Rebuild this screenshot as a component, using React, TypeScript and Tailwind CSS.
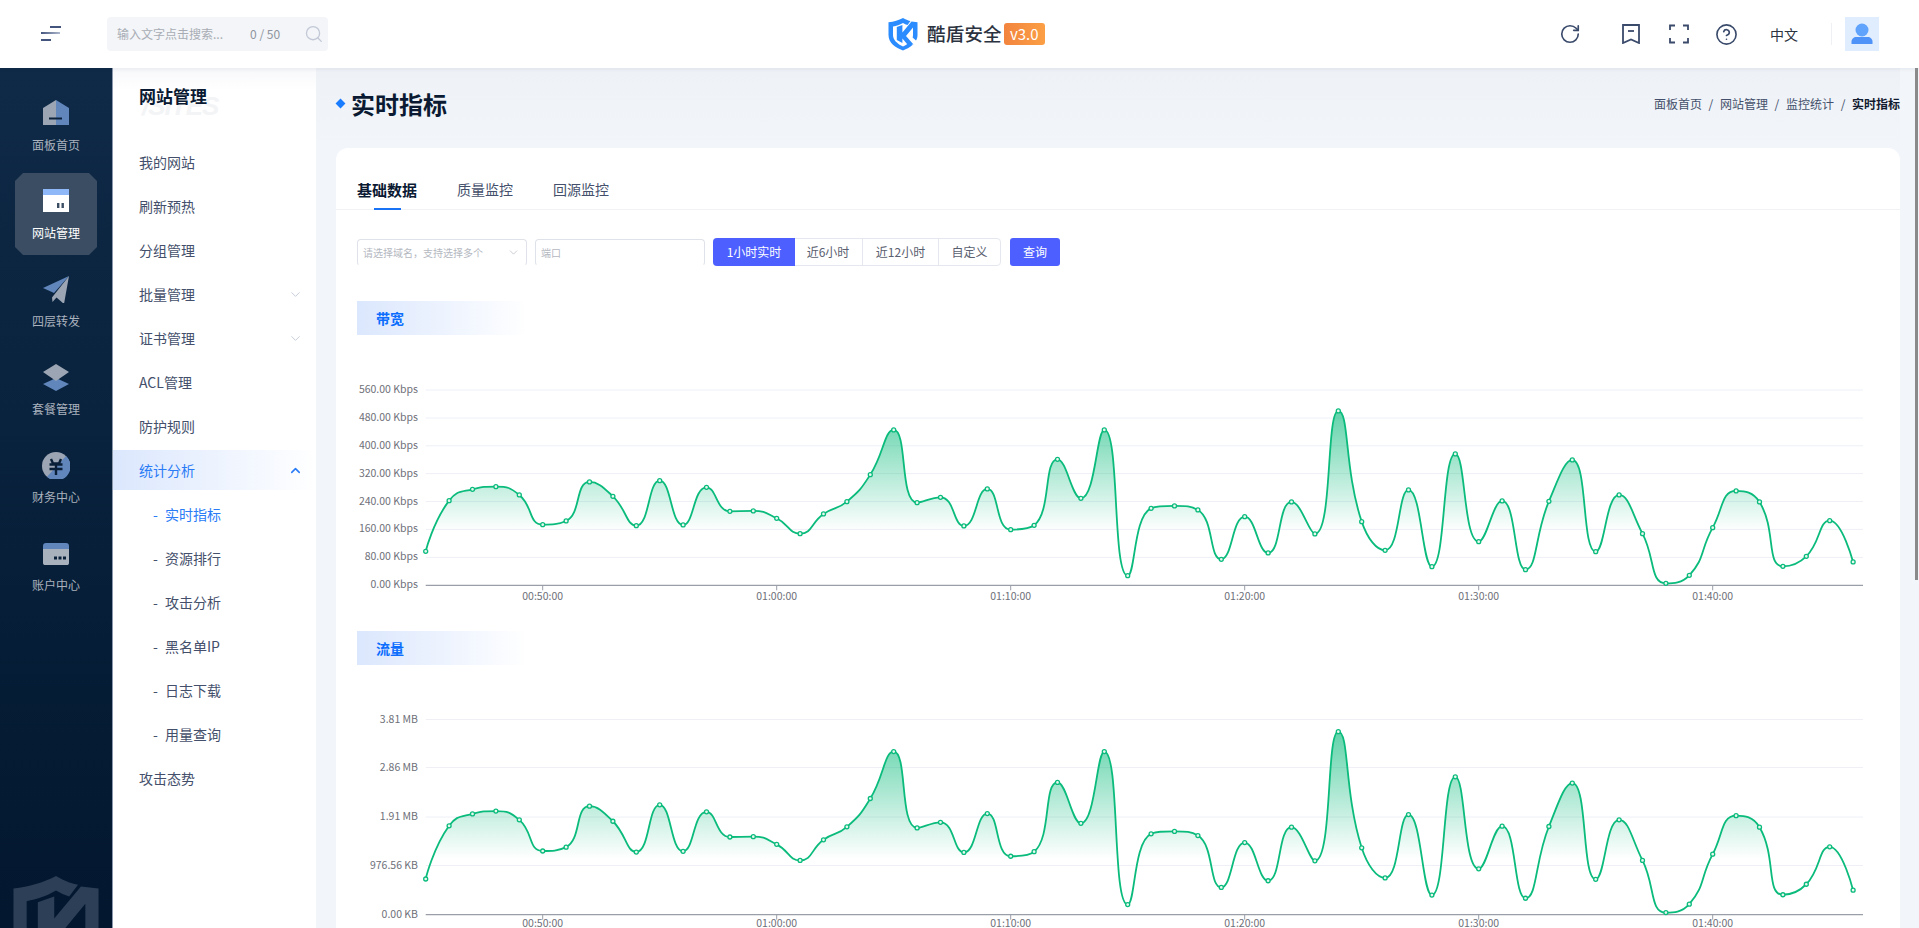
import { ChevronDown, ChevronUp, CircleHelp, RotateCw, Search } from 'lucide-react';

// y position of every sample, read from the bandwidth chart (px above baseline / 3 scale)
const samples = [
	544, 392, 358, 350, 375, 464, 453, 336, 379, 467, 332, 465, 352, 424, 423, 445, 491, 432, 395, 314, 180,
	398, 382, 468, 357, 479, 466, 268, 385, 180, 617, 415, 408, 420, 568, 440, 549, 396, 492, 123, 455, 541,
	360, 590, 252, 515, 393, 599, 394, 270, 545, 375, 491, 640, 616, 473, 363, 396, 589, 559, 452, 576,
];
const heights = samples.map((s) => (646 - s) / 3);

const X0 = 425.7;
const XN = 1863;
const STEP = 23.4;
const ticks = ['00:50:00', '01:00:00', '01:10:00', '01:20:00', '01:30:00', '01:40:00'];

const clamp = (v: number, a: number, b: number) => Math.max(Math.min(a, b), Math.min(v, Math.max(a, b)));

// same control point rule as a smoothed echarts line: no overshoot past neighbouring points
function smoothPath(pts: [number, number][]) {
	const smooth = 0.5;
	const n = pts.length;
	let d = `M${pts[0][0]} ${pts[0][1]}`;
	let cp0 = pts[0];
	for (let i = 1; i < n; i++) {
		const [x, y] = pts[i];
		const [px, py] = pts[i - 1];
		if (i === n - 1) {
			d += `C${cp0[0].toFixed(2)} ${cp0[1].toFixed(2)} ${x.toFixed(2)} ${y.toFixed(2)} ${x.toFixed(2)} ${y.toFixed(2)}`;
			break;
		}
		const [nx, ny] = pts[i + 1];
		const lenPrev = Math.hypot(x - px, y - py);
		const lenNext = Math.hypot(nx - x, ny - y);
		const ratio = lenNext / (lenNext + lenPrev);
		let ncx = clamp(x + (nx - px) * smooth * ratio, x, nx);
		let ncy = clamp(y + (ny - py) * smooth * ratio, y, ny);
		const c1x = clamp(x - ((ncx - x) * lenPrev) / lenNext, px, x);
		const c1y = clamp(y - ((ncy - y) * lenPrev) / lenNext, py, y);
		ncx = x + ((x - c1x) * lenNext) / lenPrev;
		ncy = y + ((y - c1y) * lenNext) / lenPrev;
		d += `C${cp0[0].toFixed(2)} ${cp0[1].toFixed(2)} ${c1x.toFixed(2)} ${c1y.toFixed(2)} ${x.toFixed(2)} ${y.toFixed(2)}`;
		cp0 = [ncx, ncy];
	}
	return d;
}

interface ChartProps {
	id: string;
	top: number;
	height: number;
	baseline: number;
	scale: number;
	fadeEnd: number;
	grid: { y: number; label: string }[];
	labelY: number;
}

function Chart({ id, top, height, baseline, scale, fadeEnd, grid, labelY }: ChartProps) {
	const pts = heights.map((h, i): [number, number] => [X0 + i * STEP, baseline - h * scale]);
	const line = smoothPath(pts);
	const topY = Math.min(...pts.map((p) => p[1]));
	const lastX = pts[pts.length - 1][0];
	return (
		<svg
			className="block"
			width={1522}
			height={height}
			viewBox={`357 ${top} 1522 ${height}`}
			fontFamily="'Noto Sans CJK SC', sans-serif"
		>
			<defs>
				<linearGradient id={id} gradientUnits="userSpaceOnUse" x1="0" x2="0" y1={topY} y2={fadeEnd}>
					<stop offset="0" stopColor="#00b877" stopOpacity="0.62" />
					<stop offset="1" stopColor="#00b877" stopOpacity="0" />
				</linearGradient>
			</defs>
			{grid.map((g, i) => (
				<g key={g.label}>
					<line
						x1={X0}
						x2={XN}
						y1={g.y}
						y2={g.y}
						stroke={i === grid.length - 1 ? '#9a9ea8' : '#eef0f6'}
						strokeWidth={i === grid.length - 1 ? 1.3 : 1}
					/>
					<text x={418} y={g.y + 3} textAnchor="end" fontSize="10.5" fill="#6e7079">
						{g.label}
					</text>
				</g>
			))}
			{ticks.map((t, i) => {
				const x = X0 + (5 + i * 10) * STEP;
				return (
					<g key={t}>
						<line x1={x} x2={x} y1={baseline} y2={baseline + 5} stroke="#9a9ea8" />
						<text x={x} y={labelY} textAnchor="middle" fontSize="10.5" fill="#6e7079">
							{t}
						</text>
					</g>
				);
			})}
			<path d={`${line}L${lastX} ${baseline}L${X0} ${baseline}Z`} fill={`url(#${id})`} />
			<path d={line} fill="none" stroke="#0abb7c" strokeWidth="1.8" />
			{pts.map(([x, y]) => (
				<circle key={x} cx={x} cy={y} r="2" fill="#e9f9f2" stroke="#0abb7c" strokeWidth="1.3" />
			))}
		</svg>
	);
}

function Shield({ className, color }: { className: string; color: string }) {
	return (
		<svg className={className} viewBox="0 0 30 34" fill="none">
			<path
				d="M15 1C18.5 3 20.5 3.6 22.5 4L19.5 8C18 7.6 16.5 6.9 15 6C11.5 8 8.5 9 5 9.6V18C5 23 9.5 26.5 13 28.5L15 29.5C17 28.6 19.5 27 21.5 25L24.5 28C21.5 30.6 18.5 32 15 33.5C7.5 30.5 0.5 26 0.5 18V5.3C6 4.6 10.5 3.3 15 1Z"
				fill={color}
			/>
			<path d="M8.8 10L14.4 8V15.5L23.5 4.6L29.5 5.3V18C29.5 20 29 22 28 23.5L24.6 20.5C24.9 19.5 25 18.8 25 18V10.5L18 19L25.5 27.5H19.5L14.4 21.5V26L8.8 23Z" fill={color} />
		</svg>
	);
}

const HomeIcon = (
	<svg width="28" height="28" viewBox="0 0 28 28">
		<path d="M14 1L1 9V26H14Z" fill="#9ba5b3" />
		<path d="M14 1L27 9V26H14Z" fill="#6086bc" />
		<rect x="7" y="18.5" width="13" height="2" fill="#0c223c" />
	</svg>
);
const SiteIcon = (
	<svg width="28" height="28" viewBox="0 0 28 28">
		<rect x="1" y="2" width="26" height="23" fill="#ffffff" />
		<rect x="1" y="2" width="26" height="6" fill="#8fb8f8" />
		<rect x="15" y="16" width="2.4" height="5" fill="#3a4d63" />
		<rect x="19.5" y="16" width="2.4" height="5" fill="#3a4d63" />
	</svg>
);
const PlaneIcon = (
	<svg width="28" height="28" viewBox="0 0 28 28">
		<path d="M27 1L1 13L12 18Z" fill="#6086bc" />
		<path d="M27 1L10 22.5L10.5 27L14.5 22.5L22 29Z" fill="#9ba5b3" />
	</svg>
);
const LayersIcon = (
	<svg width="28" height="28" viewBox="0 0 28 28">
		<path d="M14 15L1 21L14 28L27 21Z" fill="#6086bc" />
		<path d="M14 1L1 9L14 18L27 9Z" fill="#9ba5b3" />
	</svg>
);
const FinanceIcon = (
	<svg width="28" height="28" viewBox="0 0 28 28">
		<circle cx="14" cy="15" r="14" fill="#9ba5b3" />
		<path d="M24 5A14 14 0 0 1 5 25.8Z" fill="#6086bc" />
		<path d="M9 8L11 12.5H17L19 8M7.5 13.5H20.5M7.5 18H20.5M14 13V24" fill="none" stroke="#0a2038" strokeWidth="2.4" />
	</svg>
);
const AccountIcon = (
	<svg width="28" height="28" viewBox="0 0 28 28">
		<path d="M1 10V7C1 5 2 4 4 4H24C26 4 27 5 27 7V10Z" fill="#6086bc" />
		<path d="M1 10H27V24C27 25.5 26 26 25 26H3C2 26 1 25.5 1 24Z" fill="#a9b1bd" />
		<rect x="12" y="17.5" width="3" height="3" fill="#0a2038" />
		<rect x="16.5" y="17.5" width="3" height="3" fill="#0a2038" />
		<rect x="21" y="17.5" width="3" height="3" fill="#0a2038" />
	</svg>
);

const railItems = [
	{ label: '面板首页', icon: HomeIcon },
	{ label: '网站管理', icon: SiteIcon, active: true },
	{ label: '四层转发', icon: PlaneIcon },
	{ label: '套餐管理', icon: LayersIcon },
	{ label: '财务中心', icon: FinanceIcon },
	{ label: '账户中心', icon: AccountIcon },
];

const menuItems = [
	{ label: '我的网站' },
	{ label: '刷新预热' },
	{ label: '分组管理' },
	{ label: '批量管理', arrow: true },
	{ label: '证书管理', arrow: true },
	{ label: 'ACL管理' },
	{ label: '防护规则' },
	{ label: '统计分析', open: true },
	{ label: '实时指标', sub: true, current: true },
	{ label: '资源排行', sub: true },
	{ label: '攻击分析', sub: true },
	{ label: '黑名单IP', sub: true },
	{ label: '日志下载', sub: true },
	{ label: '用量查询', sub: true },
	{ label: '攻击态势' },
];

function Rail() {
	return (
		<aside className="relative h-full w-[113px] shrink-0 overflow-hidden border-r border-[#8b97ab] bg-linear-to-b from-[#0f2a47] to-[#03172f] pt-[17px]">
			<div className="flex flex-col items-center gap-[6px]">
				{railItems.map((item) => (
					<div
						key={item.label}
						className={`flex h-[82px] w-[82px] flex-col items-center pt-[14px] ${
							item.active ? 'bg-[#3a4d63] [clip-path:polygon(8px_0,74px_0,82px_8px,82px_74px,74px_82px,8px_82px,0_74px,0_8px)]' : ''
						}`}
					>
						{item.icon}
						<span className={`mt-[9px] text-[12px] leading-[18px] ${item.active ? 'text-white' : 'text-[#aab2bd]'}`}>
							{item.label}
						</span>
					</div>
				))}
			</div>
			<Shield className="absolute left-[12px] top-[805px] w-[88px]" color="#2c3f56" />
		</aside>
	);
}

function Menu() {
	return (
		<nav className="h-full w-[203px] shrink-0 bg-white">
			<div className="relative h-[74px] bg-linear-to-b from-[#f7f8fa] to-white to-30%">
				<span className="absolute left-[29px] top-[22px] font-['Liberation_Sans',sans-serif] text-[26px] font-bold italic leading-[32px] tracking-[-1px] text-[#f3f4f6]">/SITES</span>
				<span className="absolute left-[26px] top-[16px] text-[17px] font-bold leading-[24px] text-[#0b1a33]">网站管理</span>
			</div>
			<div className="flex flex-col gap-[4px]">
				{menuItems.map((item) => (
					<div
						key={item.label}
						className={`flex h-[40px] items-center pr-[13px] text-[14px] ${item.sub ? 'pl-[40px]' : 'pl-[26px]'} ${
							item.open ? 'bg-linear-to-r from-[#dbe7fd] to-white' : ''
						} ${item.open || item.current ? 'text-[#2a7bf6]' : 'text-[#44506b]'}`}
					>
						{item.sub && <span className="w-[12px]">-</span>}
						<span className="flex-1">{item.label}</span>
						{item.arrow && <ChevronDown size={15} strokeWidth={1.5} className="text-[#c3cad8]" />}
						{item.open && <ChevronUp size={15} strokeWidth={2.5} className="text-[#2a7bf6]" />}
					</div>
				))}
			</div>
		</nav>
	);
}

function Header() {
	return (
		<header className="relative z-10 flex h-[68px] shrink-0 items-center bg-white shadow-[0_1px_4px_rgba(30,50,90,0.08)]">
			<svg className="ml-[41px]" width="20" height="16" viewBox="0 0 20 16">
				<defs>
					<linearGradient id="burger" x1="0" x2="1" y1="0" y2="0">
						<stop offset="0" stopColor="#44557d" />
						<stop offset="1" stopColor="#aeb8cc" />
					</linearGradient>
				</defs>
				<rect x="9" y="0" width="11" height="2" fill="#44557d" />
				<rect x="0" y="6" width="19" height="2" fill="url(#burger)" />
				<rect x="0" y="13" width="10" height="2" fill="#44557d" />
			</svg>
			<div className="ml-[46px] flex h-[34px] w-[221px] items-center rounded-[4px] bg-[#f3f5f8] pl-[10px] pr-[4px] text-[12px]">
				<span className="w-[135px] text-[#a8adb5]">输入文字点击搜索...</span>
				<span className="w-[55px] text-[#8e949e]">0 / 50</span>
				<Search size={20} strokeWidth={1.6} className="text-[#c2c8d6]" />
			</div>
			<div className="ml-[560px] flex items-center">
				<Shield className="h-[34px] w-[30px]" color="#2b8cff" />
				<span className="ml-[9px] text-[18.5px] font-medium tracking-[0.2px] text-[#2b3240]">酷盾安全</span>
				<span className="ml-[2px] flex h-[22px] w-[41px] items-center justify-center rounded-[3px] bg-linear-to-r from-[#f2843e] to-[#fb9f45] text-[15px] text-white">
					v3.0
				</span>
			</div>
			<div className="ml-auto flex items-center pr-[40px] text-[#3a4a6b]">
				<RotateCw size={22} strokeWidth={1.8} />
				<svg className="ml-[40px]" width="20" height="20" viewBox="0 0 20 20" fill="none" stroke="currentColor" strokeWidth="1.8">
					<path d="M2 1H18V19L10 15.5L2 19Z" />
					<path d="M7 7H13" />
				</svg>
				<svg className="ml-[28px]" width="20" height="20" viewBox="0 0 20 20" fill="none" stroke="currentColor" strokeWidth="1.8">
					<path d="M1 6V1.5H6M14 1.5H19V6M19 14V18.5H14M6 18.5H1V14" />
				</svg>
				<CircleHelp className="ml-[26px]" size={23} strokeWidth={1.7} />
				<span className="ml-[32px] text-[14px] text-[#2b3240]">中文</span>
				<div className="ml-[33px] h-[22px] w-px bg-[#eef0f4]" />
				<div className="ml-[13px] flex h-[34px] w-[34px] items-center justify-center bg-[#e0edff]">
					<svg width="22" height="24" viewBox="0 0 22 24">
						<circle cx="11" cy="8" r="6.5" fill="#5fa3fd" />
						<path d="M0.5 22V19.5C0.5 17 3 15 5 15H17C19 15 21.5 17 21.5 19.5V22Z" fill="#4f93f8" />
					</svg>
				</div>
			</div>
		</header>
	);
}

const bandwidthGrid = [
	{ y: 390, label: '560.00 Kbps' },
	{ y: 418, label: '480.00 Kbps' },
	{ y: 445.8, label: '400.00 Kbps' },
	{ y: 473.6, label: '320.00 Kbps' },
	{ y: 501.5, label: '240.00 Kbps' },
	{ y: 529.4, label: '160.00 Kbps' },
	{ y: 557.4, label: '80.00 Kbps' },
	{ y: 585.3, label: '0.00 Kbps' },
];
const trafficGrid = [
	{ y: 719.5, label: '3.81 MB' },
	{ y: 767.5, label: '2.86 MB' },
	{ y: 817, label: '1.91 MB' },
	{ y: 865.5, label: '976.56 KB' },
	{ y: 914.7, label: '0.00 KB' },
];

function SectionTitle({ text }: { text: string }) {
	return (
		<div className="flex h-[34px] w-[170px] items-center bg-linear-to-r from-[#dbe7fd] to-white pl-[19px] text-[14px] font-bold text-[#0d6efd]">
			{text}
		</div>
	);
}

function Content() {
	return (
		<main className="min-w-0 flex-1 overflow-hidden bg-[#f2f6fa] pl-[20px] pr-[19px]">
			<div className="-ml-[20px] flex h-[80px] items-center justify-between bg-linear-to-b from-[#eef1f6] to-[#f2f6fa] pb-[9px] pl-[21px]">
				<div className="flex items-center">
					<div className="h-[7px] w-[7px] rotate-45 bg-[#1a7cff]" />
					<h1 className="ml-[7px] text-[24px] font-bold leading-[32px] text-[#0b1a33]">实时指标</h1>
				</div>
				<div className="flex items-center text-[12px] text-[#44506b]">
					<span>面板首页</span>
					<span className="w-[18px] text-center">/</span>
					<span>网站管理</span>
					<span className="w-[18px] text-center">/</span>
					<span>监控统计</span>
					<span className="w-[18px] text-center">/</span>
					<span className="font-bold text-[#111a2e]">实时指标</span>
				</div>
			</div>
			<section className="rounded-t-[12px] bg-white">
				<div className="flex h-[62px] gap-[40px] border-b border-[#f0f2f5] pl-[21px] pt-[31px] text-[14px] text-[#44506b]">
					<div className="relative h-[31px] text-[15px] font-bold leading-[21px] text-[#0b1a33]">
						基础数据
						<div className="absolute bottom-0 left-[17px] h-[2px] w-[27px] bg-[#1a73f5]" />
					</div>
					<div className="leading-[21px]">质量监控</div>
					<div className="leading-[21px]">回源监控</div>
				</div>
				<div className="px-[21px]">
					<div className="mt-[28px] flex h-[28px] items-center">
						<div className="flex h-[27px] w-[170px] items-center justify-between rounded-[4px] border border-[#dfe2e8] border-b-transparent pl-[5px] pr-[6px] text-[10px] text-[#b4b8bf]">
							<span>请选择域名，支持选择多个</span>
							<ChevronDown size={13} strokeWidth={1.3} className="text-[#b4b8bf]" />
						</div>
						<div className="ml-[8px] flex h-[27px] w-[170px] items-center rounded-[4px] border border-[#dfe2e8] border-b-transparent pl-[5px] text-[10px] text-[#b4b8bf]">
							端口
						</div>
						<div className="ml-[8px] flex h-[28px] items-center rounded-[4px] border border-[#e4e7ed] text-[12px] text-[#5a6070]">
							<div className="-m-px flex h-[28px] w-[82px] items-center justify-center rounded-l-[4px] bg-[#4d60ff] text-white">1小时实时</div>
							<div className="flex h-full w-[69px] items-center justify-center border-r border-[#e4e7ed]">近6小时</div>
							<div className="flex h-full w-[76px] items-center justify-center border-r border-[#e4e7ed]">近12小时</div>
							<div className="flex h-full w-[61px] items-center justify-center">自定义</div>
						</div>
						<button className="ml-[9px] h-[28px] w-[50px] rounded-[3px] bg-[#4d60ff] text-[12px] text-white">查询</button>
					</div>
					<div className="mt-[35px]">
						<SectionTitle text="带宽" />
					</div>
					<div className="mt-[15px]">
						<Chart id="fillA" top={350} height={270} baseline={585.3} scale={1} fadeEnd={531} grid={bandwidthGrid} labelY={600} />
					</div>
					<div className="mt-[11px]">
						<SectionTitle text="流量" />
					</div>
					<div className="mt-[15px]">
						<Chart id="fillB" top={680} height={260} baseline={914.7} scale={1.05} fadeEnd={859} grid={trafficGrid} labelY={927} />
					</div>
				</div>
			</section>
		</main>
	);
}

export default function App() {
	return (
		<div className="relative flex h-[928px] w-[1919px] flex-col overflow-hidden bg-white font-['Noto_Sans_CJK_SC','Noto_Sans',sans-serif]">
			<Header />
			<div className="flex min-h-0 flex-1">
				<Rail />
				<Menu />
				<Content />
			</div>
			<div className="absolute right-[1px] top-[68px] z-20 h-[512px] w-[3px] bg-[#8a8a8a]" />
		</div>
	);
}
